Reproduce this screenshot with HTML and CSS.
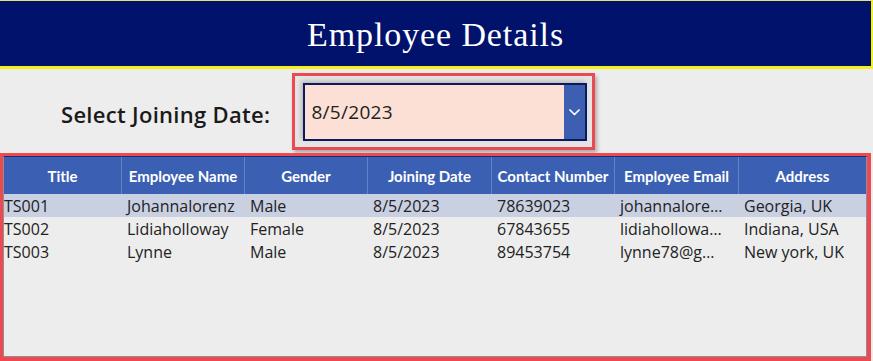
FILE: index.html
```html
<!DOCTYPE html>
<html lang="en">
<head>
<meta charset="utf-8">
<title>Employee Details</title>
<link rel="stylesheet" href="styles.css">
</head>
<body>
<div class="screen">
  <header class="app-header">
    <h1 class="app-title">Employee Details</h1>
  </header>

  <section class="filter-row">
    <label class="filter-label">Select Joining Date:</label>
    <div class="highlight-box">
      <div class="date-picker">
        <span class="date-value">8/5/2023</span>
        <span class="date-button">
          <svg width="11" height="7" viewBox="0 0 11 7" aria-hidden="true">
            <path d="M1 1 L5.5 5.5 L10 1" fill="none" stroke="#ffffff" stroke-width="1.7" stroke-linecap="round" stroke-linejoin="round"/>
          </svg>
        </span>
      </div>
    </div>
  </section>

  <section class="table-highlight">
    <div class="grid">
      <div class="grid-head">
        <div class="head-cell first">Title</div>
        <div class="head-cell">Employee Name</div>
        <div class="head-cell">Gender</div>
        <div class="head-cell">Joining Date</div>
        <div class="head-cell">Contact Number</div>
        <div class="head-cell">Employee Email</div>
        <div class="head-cell last">Address</div>
      </div>
      <div class="grid-row selected">
        <div class="cell first">TS001</div>
        <div class="cell">Johannalorenz</div>
        <div class="cell">Male</div>
        <div class="cell">8/5/2023</div>
        <div class="cell">78639023</div>
        <div class="cell">johannalore…</div>
        <div class="cell">Georgia, UK</div>
      </div>
      <div class="grid-row">
        <div class="cell first">TS002</div>
        <div class="cell">Lidiaholloway</div>
        <div class="cell">Female</div>
        <div class="cell">8/5/2023</div>
        <div class="cell">67843655</div>
        <div class="cell">lidiahollowa…</div>
        <div class="cell">Indiana, USA</div>
      </div>
      <div class="grid-row">
        <div class="cell first">TS003</div>
        <div class="cell">Lynne</div>
        <div class="cell">Male</div>
        <div class="cell">8/5/2023</div>
        <div class="cell">89453754</div>
        <div class="cell">lynne78@g…</div>
        <div class="cell">New york, UK</div>
      </div>
    </div>
  </section>
</div>
</body>
</html>
```

FILE: styles.css
```css
* { box-sizing: border-box; }

html, body {
  margin: 0;
  padding: 0;
  background: #ededed;
}

.screen {
  width: 873px;
  height: 361px;
  overflow: hidden;
  display: flex;
  flex-direction: column;
  background: #ededed;
  font-family: "Open Sans", "Liberation Sans", sans-serif;
}

.app-header {
  height: 69px;
  flex: 0 0 69px;
  background: #00126b;
  border-top: 1px solid #e6e27a;
  border-right: 2px solid #f3f01a;
  border-bottom: 3px solid #f3f01a;
  display: flex;
  align-items: center;
  justify-content: center;
}

.app-title {
  margin: 0;
  color: #ffffff;
  font-family: "Liberation Serif", "Times New Roman", serif;
  font-weight: 400;
  font-size: 34px;
  letter-spacing: 0.9px;
  line-height: 1;
  padding-top: 2px;
}

.filter-row {
  flex: 0 0 84px;
  display: flex;
  align-items: flex-start;
  padding: 4px 0 0 61px;
  gap: 22px;
}

.filter-label {
  font-family: "Open Sans", "Liberation Sans", sans-serif;
  font-weight: 600;
  font-size: 22px;
  letter-spacing: 0.3px;
  color: #1a1a1a;
  margin-top: 27px;
  line-height: 28px;
}

.highlight-box {
  width: 303px;
  height: 77px;
  border: 3px solid #e94b50;
  padding: 7px 5px 6px 8px;
  background: #e4e4e4;
  box-shadow: 2px 3px 4px rgba(0, 0, 0, 0.28);
}

.date-picker {
  height: 58px;
  border: 2px solid #0b1a5e;
  background: #fde0d5;
  display: flex;
  align-items: stretch;
  box-shadow: -2px -2px 4px rgba(0, 0, 0, 0.18);
}

.date-value {
  flex: 1;
  display: flex;
  align-items: center;
  padding-left: 6px;
  font-size: 19px;
  letter-spacing: 0.3px;
  color: #222222;
}

.date-button {
  width: 21px;
  background: #3c5fb1;
  display: flex;
  align-items: center;
  justify-content: center;
}

.table-highlight {
  flex: 1;
  width: 871px;
  border-style: solid;
  border-color: #ec4a4f;
  border-width: 3px 4px 4px 3px;
}

.grid {
  height: 100%;
  border: 1px solid #8c8f99;
  border-top-color: #1c2d6a;
  background: #ededed;
  overflow: hidden;
}

.grid-head,
.grid-row {
  display: grid;
  grid-template-columns: 118px 123px 123px 124px 123px 124px 1fr;
}

.grid-head {
  height: 37px;
  background: #3b60b3;
}

.head-cell {
  display: flex;
  align-items: center;
  justify-content: center;
  color: #ffffff;
  font-family: "Lato", "Open Sans", sans-serif;
  font-weight: 700;
  font-size: 15px;
  border-right: 1px solid #6482c6;
  white-space: nowrap;
}

.head-cell.last {
  border-right: none;
}

.grid-row {
  height: 23px;
}

.grid-row.selected {
  background: #c9d0e2;
}

.cell {
  font-size: 16px;
  line-height: 23px;
  padding: 1px 0 0 5px;
  color: #222222;
  white-space: nowrap;
  overflow: hidden;
}

.cell.first {
  padding-left: 0;
}
```
